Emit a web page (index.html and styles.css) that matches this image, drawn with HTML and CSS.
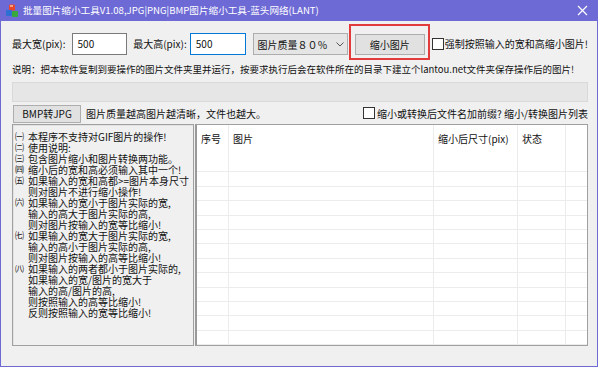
FILE: index.html
```html
<!DOCTYPE html>
<html lang="zh-CN">
  <head>
    <meta charset="UTF-8" />
    <title>批量图片缩小工具</title>
    <link rel="stylesheet" href="styles.css">
  </head>
  <body>
    <div class="window">
      <div class="titlebar">
        <svg class="appIcon" width="14" height="14" viewBox="0 0 14 14">
          <rect x="4" y="0.5" width="6" height="6" rx="1" fill="#e8452c" />
          <rect x="5" y="1" width="3" height="2" fill="#f7a07a" />
          <rect x="1" y="6" width="6" height="6" rx="1" fill="#2d6fd2" />
          <rect x="7" y="7" width="6" height="6" rx="1" fill="#37a83a" />
        </svg>
        <span class="titleText">批量图片缩小工具V1.08,JPG|PNG|BMP图片缩小工具-蓝头网络(LANT)</span>
        <svg class="closeIcon" width="11" height="11" viewBox="0 0 11 11">
          <path d="M1 1 L10 10 M10 1 L1 10" stroke="#fff" stroke-width="1.2" />
        </svg>
      </div>
      <div class="content">
        <div class="row1">
          <span class="lbl lblW">最大宽(pix):</span>
          <div class="input inputW">500</div>
          <span class="lbl lblH">最大高(pix):</span>
          <div class="input inputH focused">500</div>
          <div class="select">
            <span>图片质量８０％</span>
            <svg width="8" height="5" viewBox="0 0 8 5"><path d="M0.5 0.5 L4 4 L7.5 0.5" fill="none" stroke="#555" stroke-width="1" /></svg>
          </div>
          <div class="highlight">
            <div class="btn btnShrink">缩小图片</div>
          </div>
          <span class="chk chkForce"></span>
          <span class="lbl">强制按照输入的宽和高缩小图片!</span>
        </div>
        <p class="desc">说明：把本软件复制到要操作的图片文件夹里并运行，按要求执行后会在软件所在的目录下建立个lantou.net文件夹保存操作后的图片!</p>
        <div class="progress"></div>
        <div class="row4">
          <div class="btn btnConvert">BMP转JPG</div>
          <span class="lbl hint">图片质量越高图片越清晰，文件也越大。</span>
          <span class="chk chkPrefix"></span>
          <span class="lbl">缩小或转换后文件名加前缀? 缩小/转换图片列表</span>
        </div>
        <div class="panels">
          <div class="notes">
            <div class="note"><span class="num">㈠</span><span>本程序不支持对GIF图片的操作!</span></div>
            <div class="note"><span class="num">㈡</span><span>使用说明:</span></div>
            <div class="note"><span class="num">㈢</span><span>包含图片缩小和图片转换两功能。</span></div>
            <div class="note"><span class="num">㈣</span><span>缩小后的宽和高必须输入其中一个!</span></div>
            <div class="note"><span class="num">㈤</span><span>如果输入的宽和高都&gt;=图片本身尺寸<br />则对图片不进行缩小操作!</span></div>
            <div class="note"><span class="num">㈥</span><span>如果输入的宽小于图片实际的宽,<br />输入的高大于图片实际的高,<br />则对图片按输入的宽等比缩小!</span></div>
            <div class="note"><span class="num">㈦</span><span>如果输入的宽大于图片实际的宽,<br />输入的高小于图片实际的高,<br />则对图片按输入的高等比缩小!</span></div>
            <div class="note"><span class="num">㈧</span><span>如果输入的两者都小于图片实际的,<br />如果输入的宽/图片的宽大于<br />输入的高/图片的高,<br />则按照输入的高等比缩小!<br />反则按照输入的宽等比缩小!</span></div>
          </div>
          <div class="list">
            <div class="col colNo"><div class="head">序号</div></div>
            <div class="col colPic"><div class="head">图片</div></div>
            <div class="col colSize"><div class="head">缩小后尺寸(pix)</div></div>
            <div class="col colState"><div class="head">状态</div></div>
            <div class="col colRest"></div>
          </div>
        </div>
      </div>
    </div>
  </body>
</html>
```

FILE: styles.css
```css
body {
  margin: 0;
  background: #fff;
  font-family: "Noto Sans CJK SC", "Noto Sans", sans-serif;
  font-size: 10px;
  color: #111;
}

.window {
  width: 596px;
  height: 366px;
  border: 1px solid #6d6ad6;
  border-top: none;
  background: #f0f0f0;
}

.titlebar {
  height: 21px;
  background: #6d6ad6;
  display: flex;
  align-items: center;
  color: #fff;
}

.appIcon {
  margin-left: 4px;
  margin-right: 4px;
}

.titleText {
  flex: 1;
  font-size: 9.6px;
  line-height: 21px;
  white-space: nowrap;
}

.closeIcon {
  margin-right: 9px;
}

.content {
  padding: 0 9px 0 11px;
}

.lbl {
  line-height: 14px;
  white-space: nowrap;
}

.row1 {
  display: flex;
  align-items: center;
  height: 22px;
  margin-top: 12px;
}

.lblW {
  width: 60px;
}

.lblH {
  width: 57px;
  margin-left: 6px;
}

.input {
  height: 20px;
  line-height: 20px;
  border: 1px solid #7a7a7a;
  background: #fff;
  padding-left: 5px;
  box-sizing: content-box;
}

.inputW {
  width: 49px;
}

.inputH {
  width: 50px;
}

.focused {
  border-color: #0078d7;
}

.select {
  height: 20px;
  width: 87px;
  margin-left: 7px;
  border: 1px solid #adadad;
  background: #e5e5e5;
  display: flex;
  align-items: center;
  justify-content: space-between;
  padding: 0 3px 0 3px;
  box-sizing: content-box;
}

.highlight {
  border: 2px solid #e23b3b;
  margin: -10px 0 -5px 1px;
  padding: 8px 3px 3px 4px;
}

.btn {
  background: #e1e1e1;
  border: 1px solid #adadad;
  text-align: center;
}

.btnShrink {
  width: 68px;
  height: 19px;
  line-height: 19px;
}

.chk {
  width: 10px;
  height: 10px;
  border: 1px solid #333;
  background: #fff;
  flex: none;
}

.chkForce {
  margin-left: 2px;
  margin-right: 1px;
}

.desc {
  margin: 7px 0 0 0;
  font-size: 9.5px;
  line-height: 14px;
  white-space: nowrap;
}

.progress {
  margin-top: 6px;
  height: 18px;
  border: 1px solid #d9d9d9;
  background: #e6e6e6;
}

.row4 {
  display: flex;
  align-items: center;
  height: 18px;
  margin-top: 3px;
}

.btnConvert {
  width: 66px;
  height: 16px;
  line-height: 16px;
  margin-left: 1px;
}

.hint {
  margin-left: 5px;
  flex: 1;
}

.chkPrefix {
  margin-top: -3px;
  margin-right: 2px;
}

.panels {
  display: flex;
  gap: 1px;
  height: 222px;
  margin-top: 1px;
}

.notes {
  width: 178px;
  border: 1px solid #a0a0a0;
  box-shadow: inset 1px 1px 0 #e3e3e3;
  padding: 6px 0 0 2px;
  line-height: 11px;
}

.note {
  display: flex;
  white-space: nowrap;
}

.num {
  width: 13px;
  flex: none;
  font-size: 9px;
}

.list {
  flex: 1;
  display: flex;
  border: 1px solid #a0a0a0;
  border-left: 2px solid #9a9a9a;
  background-color: #fff;
  background-image: repeating-linear-gradient(to bottom, transparent 0, transparent 13.4px, #ececec 13.4px, #ececec 14.4px);
  background-position: 0 33px;
  background-repeat: no-repeat;
  background-size: 100% 190px;
  overflow: hidden;
}

.col {
  border-right: 1px solid #ececec;
}

.head {
  padding: 7px 0 0 4px;
  line-height: 14px;
  white-space: nowrap;
}

.colNo {
  width: 31px;
}

.colPic {
  width: 204px;
}

.colSize {
  width: 83px;
}

.colState {
  width: 47px;
}

.colRest {
  flex: 1;
  border-right: none;
}
```
